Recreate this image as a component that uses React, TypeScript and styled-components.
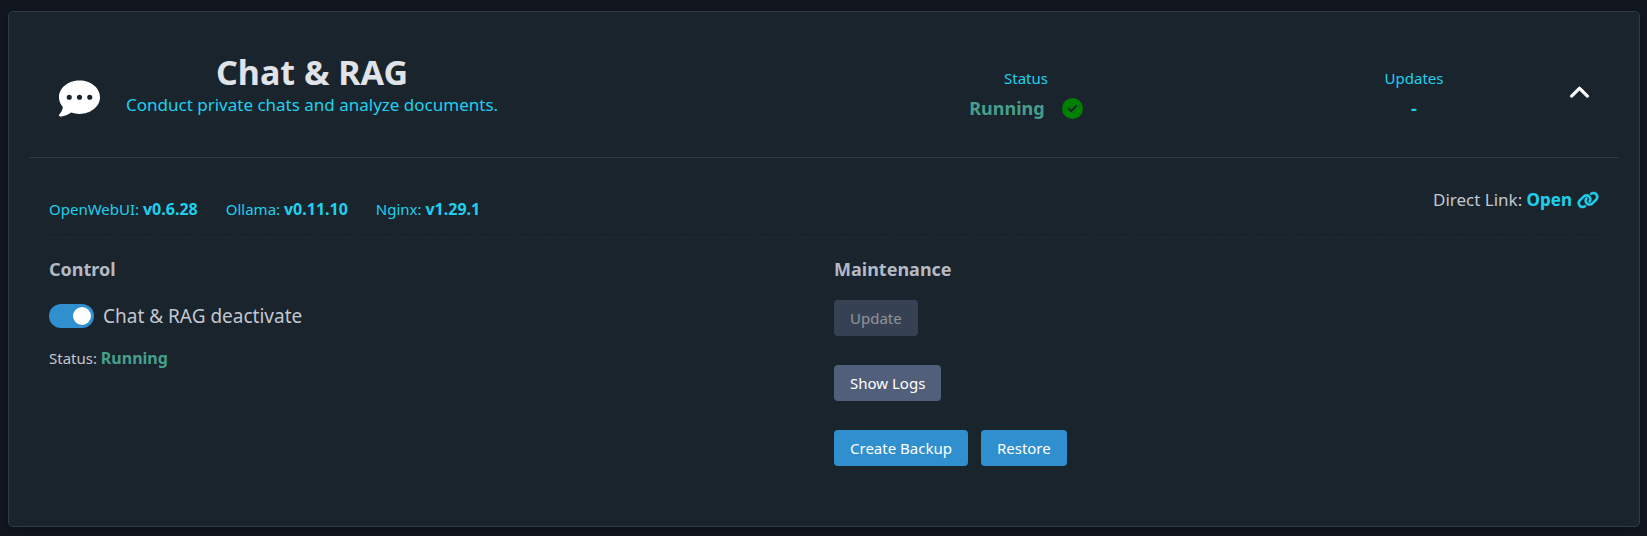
import React, { useState } from 'react';
import styled, { createGlobalStyle } from 'styled-components';
import { FaChevronUp, FaCircleCheck, FaCommentDots, FaLink } from 'react-icons/fa6';

const GlobalStyle = createGlobalStyle`
  * {
    box-sizing: border-box;
  }
  body {
    margin: 0;
    background: #13171f;
    color: #c2c7d0;
    font-family: "Noto Sans", "Open Sans", sans-serif;
    font-size: 15px;
    line-height: 24px;
  }
`;

const Page = styled.main`
  padding: 11px 7px 8px 8px;
`;

const Card = styled.article`
  border: 1px solid #2e3b49;
  border-radius: 5px;
  background: #1a242d;
  padding: 0 20px 60px;
  box-shadow: 0 4px 14px rgba(8, 10, 16, 0.4);
`;

const CardHeader = styled.header`
  display: grid;
  grid-template-columns: 60px 674fr 486fr 290fr 40px;
  align-items: center;
  padding: 40px 20px 22px;
  border-bottom: 1px solid #2e3b49;
`;

const ServiceIcon = styled.div`
  display: flex;
  padding: 10px 0 0 10px;
  color: #fff;
`;

const ServiceText = styled.div`
  justify-self: start;
  padding: 0 0 18px 17px;
  text-align: center;
`;

const Title = styled.h2`
  margin: 0;
  color: #e0e3e7;
  font-size: 34px;
  font-weight: 700;
  line-height: 40px;
`;

const Subtitle = styled.p`
  margin: 0;
  color: #1fd0ee;
  font-size: 17px;
  line-height: 25px;
`;

const Summary = styled.div`
  display: flex;
  flex-direction: column;
  align-items: center;
  padding-bottom: 1px;
  color: #1fd0ee;
  line-height: 30px;
`;

const SummaryValue = styled.div`
  display: flex;
  align-items: center;
  gap: 17px;
  font-size: 18px;
  font-weight: 700;
`;

const Running = styled.strong<{ $compact?: boolean }>`
  color: #459f8b;
  font-size: ${(p) => (p.$compact ? '16px' : '18px')};
  font-weight: 700;
`;

const CheckIcon = styled(FaCircleCheck)`
  color: #008000;
`;

const ChevronIcon = styled(FaChevronUp)`
  stroke: currentColor;
  stroke-width: 20px;
`;

const LinkIcon = styled(FaLink)`
  stroke: currentColor;
  stroke-width: 12px;
`;

const CollapseButton = styled.button`
  display: flex;
  align-items: center;
  justify-content: center;
  height: 40px;
  padding: 0;
  border: 0;
  background: none;
  color: #fff;
  cursor: pointer;
`;

const Body = styled.div`
  padding: 29px 20px 0;
`;

const InfoRow = styled.div`
  display: flex;
  justify-content: space-between;
  align-items: flex-start;
  padding-bottom: 16px;
  border-bottom: 1px dashed #202c37;
`;

const Versions = styled.div`
  display: flex;
  gap: 28px;
  padding-top: 10px;
  color: #1fd0ee;
`;

const Version = styled.strong`
  font-size: 16px;
  font-weight: 700;
`;

const DirectLink = styled.div`
  font-size: 17px;
  line-height: 25px;
`;

const OpenLink = styled.a`
  display: inline-flex;
  align-items: center;
  gap: 5px;
  color: #1fd0ee;
  font-weight: 700;
  text-decoration: none;
`;

const Columns = styled.div`
  display: grid;
  grid-template-columns: 1fr 1fr;
  gap: 20px;
  padding-top: 18px;
`;

const SectionTitle = styled.h4`
  margin: 0 0 18px;
  color: #b3b9c5;
  font-size: 18px;
  font-weight: 700;
  line-height: 26px;
`;

const SwitchLabel = styled.label`
  display: flex;
  align-items: center;
  gap: 9px;
  margin: 20px 0 16px;
  font-size: 19px;
  line-height: 28px;
  cursor: pointer;
`;

const Switch = styled.input`
  appearance: none;
  display: flex;
  width: 45px;
  height: 24px;
  margin: 0;
  padding: 3px;
  border-radius: 12px;
  background: #525f7a;
  cursor: pointer;

  &::before {
    content: "";
    width: 18px;
    height: 18px;
    border-radius: 50%;
    background: #fff;
  }

  &:checked {
    justify-content: flex-end;
    background: #2f8fcf;
  }
`;

const Actions = styled.div`
  display: flex;
  flex-direction: column;
  gap: 29px;
`;

const ActionRow = styled.div`
  display: flex;
  gap: 13px;
`;

const Button = styled.button<{ $secondary?: boolean }>`
  height: 36px;
  padding: 0 16px;
  border: 0;
  border-radius: 4px;
  background: ${(p) => (p.$secondary ? '#525f7a' : '#2f8fcf')};
  color: #fff;
  font: inherit;
  cursor: pointer;

  &:disabled {
    opacity: 0.5;
    cursor: default;
  }
`;

const versions = [
  { name: 'OpenWebUI', version: 'v0.6.28' },
  { name: 'Ollama', version: 'v0.11.10' },
  { name: 'Nginx', version: 'v1.29.1' },
];

export default function App() {
  const [active, setActive] = useState(true);

  return (
    <Page>
      <GlobalStyle />
      <Card>
        <CardHeader>
          <ServiceIcon>
            <FaCommentDots size={41} />
          </ServiceIcon>
          <ServiceText>
            <Title>Chat &amp; RAG</Title>
            <Subtitle>Conduct private chats and analyze documents.</Subtitle>
          </ServiceText>
          <Summary>
            <span>Status</span>
            <SummaryValue>
              <Running>Running</Running>
              <CheckIcon size={21} />
            </SummaryValue>
          </Summary>
          <Summary>
            <span>Updates</span>
            <SummaryValue>-</SummaryValue>
          </Summary>
          <CollapseButton type="button" aria-label="Collapse" aria-expanded>
            <ChevronIcon size={21} />
          </CollapseButton>
        </CardHeader>

        <Body>
          <InfoRow>
            <Versions>
              {versions.map((v) => (
                <span key={v.name}>
                  {v.name}: <Version>{v.version}</Version>
                </span>
              ))}
            </Versions>
            <DirectLink>
              Direct Link:{' '}
              <OpenLink href="#open">
                Open <LinkIcon size={22} />
              </OpenLink>
            </DirectLink>
          </InfoRow>

          <Columns>
            <section>
              <SectionTitle>Control</SectionTitle>
              <SwitchLabel>
                <Switch
                  type="checkbox"
                  role="switch"
                  checked={active}
                  onChange={(e) => setActive(e.target.checked)}
                />
                Chat &amp; RAG deactivate
              </SwitchLabel>
              <div>
                Status: <Running $compact>Running</Running>
              </div>
            </section>
            <section>
              <SectionTitle>Maintenance</SectionTitle>
              <Actions>
                <ActionRow>
                  <Button type="button" $secondary disabled>
                    Update
                  </Button>
                </ActionRow>
                <ActionRow>
                  <Button type="button" $secondary>
                    Show Logs
                  </Button>
                </ActionRow>
                <ActionRow>
                  <Button type="button">Create Backup</Button>
                  <Button type="button">Restore</Button>
                </ActionRow>
              </Actions>
            </section>
          </Columns>
        </Body>
      </Card>
    </Page>
  );
}
